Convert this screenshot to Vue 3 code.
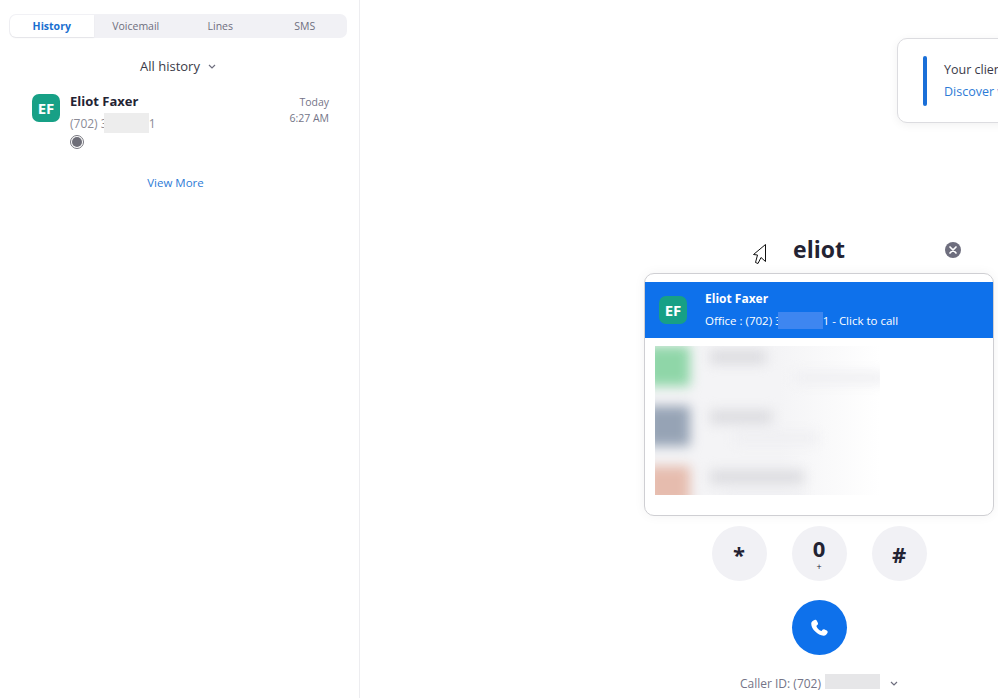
<script setup>
const tabs = ['History', 'Voicemail', 'Lines', 'SMS']

const blurredRows = [
  { color: '#8fd6a8', nameWidth: 56, subWidth: 92, subLeft: 84 },
  { color: '#96a3b5', nameWidth: 62, subWidth: 84, subLeft: 24 },
  { color: '#e6bcae', nameWidth: 94, subWidth: 80, subLeft: 14 }
]

const keys = [
  { label: '*' },
  { label: '0', sub: '+' },
  { label: '#' }
]
</script>

<template>
  <div class="app">
    <aside class="sidebar">
      <div class="tabs">
        <div v-for="(tab, i) in tabs" :key="tab" class="tab" :class="{ active: i === 0 }">{{ tab }}</div>
      </div>

      <div class="filter">
        All history
        <svg class="chevron" width="8" height="5" viewBox="0 0 8 5"><path d="M1 1l3 3 3-3" fill="none" stroke="#6e6e7e" stroke-width="1.2" /></svg>
      </div>

      <div class="call-row">
        <div class="avatar">EF</div>
        <div class="call-info">
          <div class="call-name">Eliot Faxer</div>
          <div class="call-number">(702) 3<span class="redact"></span>1</div>
          <svg class="record" width="14" height="14" viewBox="0 0 14 14">
            <circle cx="7" cy="7" r="6.5" fill="#fff" stroke="#77777f" />
            <circle cx="7" cy="7" r="5" fill="#6e6e78" />
          </svg>
        </div>
        <div class="call-time">
          <div>Today</div>
          <div>6:27 AM</div>
        </div>
      </div>

      <div class="view-more">View More</div>
    </aside>

    <main class="main">
      <div class="notice">
        <div class="notice-bar"></div>
        <div class="notice-text">
          <div>Your client version is out of date.</div>
          <div class="notice-link">Discover what's new</div>
        </div>
      </div>

      <section class="dialer">
        <div class="search">
          <svg class="cursor" width="18" height="26" viewBox="0 0 18 26">
            <path d="M15.500 3.500L3.500 13.500L7.500 14L5.500 21.500L8 22.500L11 16.500L15.500 20.500Z" fill="#fff" stroke="#111" stroke-width="1" />
          </svg>
          <span class="search-text">eliot</span>
          <svg class="clear" width="16" height="16" viewBox="0 0 16 16">
            <circle cx="8" cy="8" r="8" fill="#6e6e7e" />
            <path d="M5 5l6 6M11 5l-6 6" stroke="#fff" stroke-width="1.700" stroke-linecap="round" />
          </svg>
        </div>

        <div class="results">
          <div class="result">
            <div class="avatar">EF</div>
            <div class="result-info">
              <div class="result-name">Eliot Faxer</div>
              <div class="result-sub">Office : (702) 3<span class="redact blue"></span>1 - Click to call</div>
            </div>
          </div>
          <div class="blur-clip">
            <div class="blur-list">
              <div v-for="row in blurredRows" :key="row.color" class="blur-row">
                <div class="blur-avatar" :style="{ background: row.color }"></div>
                <div class="blur-lines">
                  <div class="blur-name" :style="{ width: row.nameWidth + 'px' }"></div>
                  <div class="blur-sub" :style="{ width: row.subWidth + 'px', marginLeft: row.subLeft + 'px' }"></div>
                </div>
              </div>
            </div>
          </div>
        </div>

        <div class="keypad">
          <div v-for="key in keys" :key="key.label" class="key">
            <span class="key-label">{{ key.label }}</span>
            <span v-if="key.sub" class="key-sub">{{ key.sub }}</span>
          </div>
        </div>

        <div class="call-btn">
          <svg width="22" height="22" viewBox="0 0 24 24">
            <path d="M7.200 3.300c.9-.5 1.900-.2 2.400.7l1.100 2.200c.4.800.3 1.700-.3 2.300l-.9.900c-.3.300-.3.600-.2 1 .5 1.100 1.200 2 2.100 2.900.8.800 1.600 1.400 2.500 1.800.4.200.8.100 1.100-.2l.8-.9c.6-.6 1.500-.8 2.300-.4l2.400 1.200c.9.500 1.200 1.500.8 2.400-.7 1.500-2.200 3.300-4.300 3.200-3.300-.2-6.400-1.900-8.800-4.300C5.300 13.500 3.500 10.300 3.500 7c0-1.700 2.200-3.100 3.700-3.700z" fill="#fff" />
          </svg>
        </div>

        <div class="caller-id">
          Caller ID: (702)
          <span class="redact caller"></span>
          <svg class="chevron" width="8" height="5" viewBox="0 0 8 5"><path d="M1 1l3 3 3-3" fill="none" stroke="#6e6e7e" stroke-width="1.2" /></svg>
        </div>
      </section>
    </main>
  </div>
</template>

<style>
html, body {
  margin: 0;
  background: #fff;
}
</style>

<style scoped>
.app {
  display: flex;
  width: 998px;
  height: 698px;
  overflow: hidden;
  font-family: "Open Sans", "Noto Sans", sans-serif;
  color: #232333;
}

.sidebar {
  width: 359px;
  flex: none;
  box-sizing: border-box;
  border-right: 1px solid #ededf0;
  padding: 14px 12px 0 9px;
  width: 360px;
}

.tabs {
  display: grid;
  grid-template-columns: repeat(4, 1fr);
  height: 24px;
  background: #f1f1f5;
  border-radius: 7px;
  padding: 1px 0;
  box-sizing: border-box;
}

.tab {
  display: flex;
  align-items: center;
  justify-content: center;
  font-size: 10.500px;
  color: #6e6e7e;
}

.tab.active {
  margin-left: 1px;
  background: #fff;
  border-radius: 6px 0 0 6px;
  box-shadow: 0 1px 2px rgba(0, 0, 0, 0.06);
  color: #1a6fd0;
  font-weight: 700;
}

.filter {
  display: flex;
  align-items: center;
  justify-content: center;
  gap: 8px;
  margin-top: 18px;
  height: 20px;
  padding-right: 0;
  font-size: 13px;
  color: #3a3a48;
}

.call-row {
  display: flex;
  margin-top: 18px;
  padding: 0 18px 0 23px;
}

.avatar {
  width: 28px;
  height: 28px;
  flex: none;
  display: flex;
  align-items: center;
  justify-content: center;
  border-radius: 7px;
  background: #17a086;
  color: #fff;
  font-size: 15px;
  font-weight: 700;
}

.call-info {
  flex: 1;
  margin-left: 10px;
}

.call-name {
  font-size: 13px;
  font-weight: 700;
  line-height: 18px;
  color: #232333;
  margin-top: -2px;
}

.call-number {
  display: flex;
  align-items: center;
  height: 20px;
  margin-top: 3px;
  font-size: 12px;
  color: #8b8b96;
}

.redact {
  display: inline-block;
  width: 45px;
  height: 20px;
  margin-left: -4px;
  background: #ededed;
}

.record {
  display: block;
  margin-top: 2px;
}

.call-time {
  text-align: right;
  font-size: 10.500px;
  line-height: 16px;
  color: #747487;
}

.view-more {
  margin-top: 26px;
  text-align: center;
  font-size: 11.500px;
  color: #2d7bd6;
  padding-right: 5px;
}

.main {
  position: relative;
  flex: 1;
  display: flex;
  justify-content: flex-end;
  overflow: hidden;
}

.notice {
  position: absolute;
  top: 38px;
  left: 537px;
  width: 340px;
  height: 85px;
  box-sizing: border-box;
  display: flex;
  align-items: center;
  padding-left: 25px;
  gap: 17px;
  background: #fff;
  border: 1px solid #dcdce0;
  border-radius: 10px;
  box-shadow: 0 2px 10px rgba(0, 0, 0, 0.06);
  font-size: 12.500px;
  line-height: 22px;
  white-space: nowrap;
  color: #3a3a48;
}

.notice-bar {
  width: 4px;
  height: 50px;
  border-radius: 2px;
  background: #1a6fd8;
}

.notice-link {
  color: #2d7bd6;
}

.dialer {
  width: 350px;
  margin-right: 4px;
  display: flex;
  flex-direction: column;
  align-items: center;
  padding-top: 232px;
}

.search {
  position: relative;
  width: 100%;
  height: 34px;
  display: flex;
  align-items: center;
  justify-content: center;
}

.search-text {
  font-size: 23px;
  font-weight: 700;
  color: #232333;
}

.cursor {
  position: absolute;
  left: 106px;
  top: 9px;
}

.clear {
  position: absolute;
  right: 33px;
  top: 10px;
}

.results {
  box-sizing: border-box;
  width: 350px;
  height: 243px;
  margin-top: 7px;
  background: #fff;
  border: 1px solid #cfcfd3;
  border-radius: 10px;
  padding-top: 8px;
  box-shadow: 0 0 12px rgba(0, 0, 0, 0.05);
}

.result {
  display: flex;
  align-items: center;
  height: 56px;
  padding-left: 14px;
  background: #0e71eb;
  color: #fff;
}

.result-info {
  margin-left: 18px;
}

.result-name {
  font-size: 12px;
  font-weight: 700;
  line-height: 20px;
}

.result-sub {
  display: flex;
  align-items: center;
  height: 22px;
  font-size: 11.500px;
  white-space: pre;
}

.redact.blue {
  width: 45px;
  height: 17px;
  background: #3e86f0;
}

.blur-clip {
  width: 225px;
  height: 149px;
  margin: 8px 0 0 10px;
  overflow: hidden;
  background: linear-gradient(90deg, #f4f4f6 55%, #fff);
}

.blur-list {
  filter: blur(6px);
  display: flex;
  flex-direction: column;
  gap: 20px;
  margin-left: -10px;
}

.blur-row {
  display: flex;
  gap: 20px;
}

.blur-avatar {
  width: 45px;
  height: 40px;
  flex: none;
}

.blur-lines {
  display: flex;
  flex-direction: column;
  gap: 8px;
  padding-top: 4px;
}

.blur-name {
  height: 14px;
  background: #dcdce0;
}

.blur-sub {
  height: 12px;
  background: #efeff2;
}

.keypad {
  display: flex;
  gap: 25px;
  margin-top: 10px;
}

.key {
  width: 55px;
  height: 55px;
  border-radius: 50%;
  background: #f1f1f5;
  display: flex;
  flex-direction: column;
  align-items: center;
  justify-content: center;
  color: #232333;
}

.key-label {
  font-size: 22px;
  font-weight: 700;
  line-height: 26px;
}

.key-sub {
  font-size: 9px;
  line-height: 11px;
}

.call-btn {
  width: 55px;
  height: 55px;
  margin-top: 19px;
  border-radius: 50%;
  background: #0e71eb;
  display: flex;
  align-items: center;
  justify-content: center;
}

.caller-id {
  display: flex;
  align-items: center;
  gap: 4px;
  height: 20px;
  margin-top: 18px;
  font-size: 12px;
  color: #747487;
}

.redact.caller {
  width: 55px;
  height: 15px;
  margin: -4px 6px 0 0;
  background: #e6e6e8;
}
</style>
